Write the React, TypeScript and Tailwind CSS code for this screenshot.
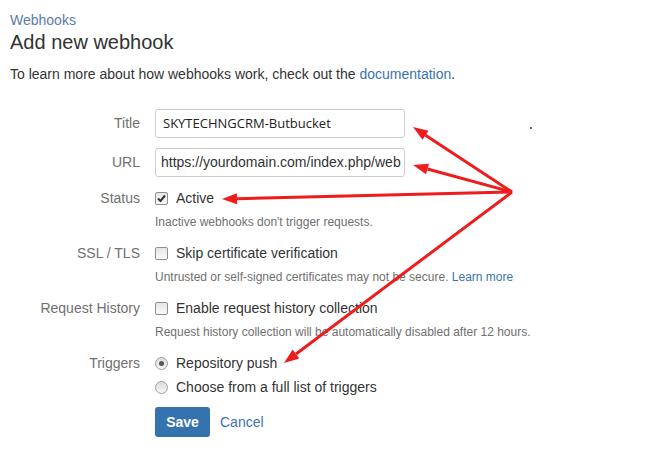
import React from "react";

const FONT = { fontFamily: '"Liberation Sans", Arial, sans-serif' };

function Label({ children }: { children: React.ReactNode }) {
  return <div className="w-[130px] shrink-0 text-right text-[14px] text-[#707070]">{children}</div>;
}

function Checkbox({ checked }: { checked?: boolean }) {
  return (
    <span className="relative inline-block h-[13px] w-[13px] shrink-0 rounded-[2px] border border-[#8f8f8f] bg-gradient-to-b from-[#e6e6e6] to-[#fafafa]">
      {checked && (
        <svg viewBox="0 0 13 13" className="absolute -left-px -top-px h-[13px] w-[13px]">
          <path d="M3 6.5 L5.5 9 L10 3.5" fill="none" stroke="#333" strokeWidth="2" />
        </svg>
      )}
    </span>
  );
}

function Radio({ checked }: { checked?: boolean }) {
  return (
    <span className="flex h-[13px] w-[13px] shrink-0 items-center justify-center rounded-full border border-[#a0a0a0] bg-gradient-to-b from-[#dcdcdc] to-[#f6f6f6]">
      {checked && <span className="h-[5px] w-[5px] rounded-full bg-[#555]" />}
    </span>
  );
}

function Help({ children, className = "" }: { children: React.ReactNode; className?: string }) {
  return (
    <div className={`flex h-4 items-center pl-[145px] text-[12px] text-[#707070] ${className}`}>{children}</div>
  );
}

function Arrow({ x1, y1, x2, y2 }: { x1: number; y1: number; x2: number; y2: number }) {
  const a = Math.atan2(y2 - y1, x2 - x1);
  const len = 15;
  const w = 5.5;
  const bx = x2 - len * Math.cos(a);
  const by = y2 - len * Math.sin(a);
  const px = -Math.sin(a) * w;
  const py = Math.cos(a) * w;
  return (
    <g>
      <line x1={x1} y1={y1} x2={bx} y2={by} stroke="#ee1c1c" strokeWidth="3" />
      <polygon points={`${x2},${y2} ${bx + px},${by + py} ${bx - px},${by - py}`} fill="#ee1c1c" />
    </g>
  );
}

export default function App() {
  return (
    <div className="relative h-[456px] w-[654px] overflow-hidden bg-white pl-[10px] pt-[11px] text-[#333]" style={FONT}>
      <div className="text-[14px] leading-[18px] text-[#5b7ba8]">Webhooks</div>
      <h1 className="text-[20px] leading-[26px] text-[#333]">Add new webhook</h1>
      <p className="mt-[9px] text-[14px] leading-[20px]">
        To learn more about how webhooks work, check out the{" "}
        <span className="text-[#3b73af]">documentation</span>.
      </p>

      <div className="mt-[25px] flex flex-col">
        <div className="flex items-center gap-[15px]">
          <Label>Title</Label>
          <div className="flex h-[29px] w-[250px] items-center rounded-[3px] border border-[#ccc] pl-[7px] text-[13px] font-medium text-[#222]" style={{ fontFamily: '"Open Sans", sans-serif' }}>
            SKYTECHNGCRM-Butbucket
          </div>
        </div>
        <div className="mt-[10px] flex items-center gap-[15px]">
          <Label>URL</Label>
          <div className="flex h-[29px] w-[250px] items-center overflow-hidden whitespace-nowrap rounded-[3px] border border-[#ccc] pl-[5px] text-[14px] text-[#333]">
            https://yourdomain.com/index.php/web
          </div>
        </div>

        <div className="mt-[11px] flex h-5 items-center gap-[15px]">
          <Label>Status</Label>
          <div className="flex items-center gap-[8px] text-[14px]">
            <Checkbox checked />
            Active
          </div>
        </div>
        <Help className="mt-[6px]">Inactive webhooks don't trigger requests.</Help>

        <div className="mt-[13px] flex h-5 items-center gap-[15px]">
          <Label>SSL / TLS</Label>
          <div className="flex items-center gap-[8px] text-[14px]">
            <Checkbox />
            Skip certificate verification
          </div>
        </div>
        <Help className="mt-[6px]">
          Untrusted or self-signed certificates may not be secure.&nbsp;<span className="text-[#3b73af]">Learn more</span>
        </Help>

        <div className="mt-[13px] flex h-5 items-center gap-[15px]">
          <Label>Request History</Label>
          <div className="flex items-center gap-[8px] text-[14px]">
            <Checkbox />
            Enable request history collection
          </div>
        </div>
        <Help className="mt-[6px]">Request history collection will be automatically disabled after 12 hours.</Help>

        <div className="mt-[13px] flex h-5 items-center gap-[15px]">
          <Label>Triggers</Label>
          <div className="flex items-center gap-[8px] text-[14px]">
            <Radio checked />
            Repository push
          </div>
        </div>
        <div className="mt-[4px] flex h-5 items-center gap-[8px] pl-[145px] text-[14px]">
          <Radio />
          Choose from a full list of triggers
        </div>

        <div className="mt-[10px] flex items-center gap-[10px] pl-[145px]">
          <button className="h-[30px] w-[55px] rounded-[3px] bg-[#3572b0] text-[14px] font-bold text-white">Save</button>
          <span className="text-[14px] text-[#3b73af]">Cancel</span>
        </div>
      </div>

      <svg className="pointer-events-none absolute left-0 top-0" width="654" height="456">
        <Arrow x1={512} y1={192} x2={413} y2={127} />
        <Arrow x1={512} y1={192} x2={413} y2={165} />
        <Arrow x1={512} y1={192} x2={222} y2={199} />
        <Arrow x1={512} y1={192} x2={284} y2={363} />
        <circle cx="531" cy="128" r="1" fill="#333" />
      </svg>
    </div>
  );
}
